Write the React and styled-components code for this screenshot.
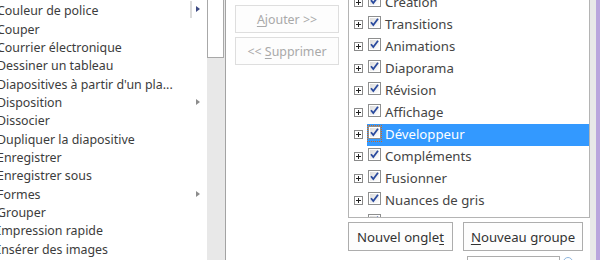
import React from 'react';
import styled, { createGlobalStyle } from 'styled-components';

const Global = createGlobalStyle`
  html, body { margin: 0; padding: 0; background: #fff; overflow: hidden; }
  body { font-family: "Noto Sans", "Open Sans", sans-serif; }
`;

const Page = styled.div`
  display: flex;
  width: 600px;
  height: 260px;
  overflow: hidden;
  background: #fff;
`;

/* ---------- left list ---------- */
const LeftPanel = styled.div`
  display: flex;
  flex: none;
  width: 225px;
  height: 100%;
  border-right: 1px solid #a3a3a3;
`;

const ItemList = styled.ul`
  list-style: none;
  margin: 0;
  padding: 1.5px 0 0;
  flex: 1;
  min-width: 0;
  overflow: hidden;
`;

const Item = styled.li`
  display: flex;
  align-items: center;
  height: 18.35px;
  font-size: 12.4px;
  color: #3c3c3c;
  white-space: nowrap;
`;

const ItemText = styled.span`
  flex: 1;
  margin-left: -3px;
`;

const Marker = styled.span`
  display: flex;
  align-items: center;
  flex: none;
  width: 17px;
  height: 100%;
  margin-top: ${p => (p.$split ? '-3px' : '0')};
`;

const SplitLine = styled.span`
  width: 2px;
  height: 17px;
  background: #dcdcdc;
  margin-right: 4px;
`;

const Arrow = styled.span`
  width: 0;
  height: 0;
  margin-left: ${p => (p.$split ? '0' : '6px')};
  border-top: 3.5px solid transparent;
  border-bottom: 3.5px solid transparent;
  border-left: 4px solid ${p => p.$color};
`;

const ScrollTrack = styled.div`
  flex: none;
  width: 18px;
  background: #e8e8e8;
`;

const Thumb = styled.div`
  width: 15px;
  height: 57px;
  background: #fff;
  border: 1px solid #a8a8a8;
  border-top: none;
`;

/* ---------- middle buttons ---------- */
const Middle = styled.div`
  flex: none;
  width: 113px;
  display: flex;
  flex-direction: column;
  gap: 4px;
  padding: 5px 0 0 9px;
`;

const DisabledButton = styled.div`
  width: 102px;
  height: ${p => p.$h}px;
  border: 1px solid #dedede;
  background: #fdfdfd;
  color: #a9a9a9;
  font-size: 12.4px;
  display: flex;
  align-items: center;
  justify-content: center;
  box-sizing: border-box;
  width: 104px;
`;

const U = styled.span`
  text-decoration: underline;
  text-underline-offset: 2px;
`;

/* ---------- right list ---------- */
const RightColumn = styled.div`
  flex: none;
  width: 242px;
  display: flex;
  flex-direction: column;
`;

const TabList = styled.div`
  height: 217px;
  flex: none;
  border: 1px solid #b4b4b4;
  border-top: none;
  overflow: hidden;
`;

const TabRows = styled.div`
  margin-top: -8px;
`;

const TabRow = styled.div`
  display: flex;
  align-items: stretch;
  height: 22px;
`;

const ExpandCell = styled.div`
  flex: none;
  width: 18px;
  display: flex;
  justify-content: center;
  padding-left: 1px;
  padding-top: 6px;
  box-sizing: border-box;
`;

const Expander = styled.svg`
  display: block;
`;

const TabLabel = styled.div`
  flex: 1;
  display: flex;
  align-items: flex-start;
  padding-top: 3px;
  box-sizing: border-box;
  background: ${p => (p.$selected ? '#3399ff' : 'transparent')};
  color: ${p => (p.$selected ? '#fff' : '#444')};
  font-size: 13.2px;
  white-space: nowrap;
`;

const CheckWrap = styled.span`
  flex: none;
  display: flex;
  width: 15px;
  height: 17px;
  margin-top: -2px;
  padding-top: 1px;
  padding-left: 1px;
  box-sizing: border-box;
  outline: ${p => (p.$focus ? '1px dotted #cc6a20' : 'none')};
  outline-offset: -1px;
`;

const TabText = styled.span`
  margin-left: 3px;
  line-height: 14px;
`;

const ButtonRow = styled.div`
  display: flex;
  gap: 10px;
  margin-top: 4px;
`;

const Button = styled.div`
  width: ${p => p.$w}px;
  height: 29px;
  border: 1px solid #adadad;
  background: #fdfdfd;
  color: #333;
  font-size: 13.2px;
  display: flex;
  align-items: center;
  justify-content: center;
  box-sizing: border-box;
`;

const BottomRow = styled.div`
  display: flex;
  align-items: flex-start;
  gap: 3px;
  margin-top: 5px;
  padding-left: 119px;
`;

const RenameBox = styled.div`
  width: 93px;
  height: 24px;
  border: 1px solid #adadad;
  box-sizing: border-box;
`;

const InfoDot = styled.div`
  width: 10px;
  height: 10px;
  margin-top: 1px;
  border-radius: 50%;
  border: 1px solid #8fb6de;
  box-sizing: border-box;
`;

const EdgeStrip = styled.div`
  flex: none;
  width: 10px;
  background: linear-gradient(to right, #e8e8e8 0 6px, #b9a5dd 6px 10px);
`;

const leftItems = [
  { t: 'Couleur de police', m: 'split' },
  { t: 'Couper' },
  { t: 'Courrier électronique' },
  { t: 'Dessiner un tableau' },
  { t: "Diapositives à partir d'un pla..." },
  { t: 'Disposition', m: 'menu' },
  { t: 'Dissocier' },
  { t: 'Dupliquer la diapositive' },
  { t: 'Enregistrer' },
  { t: 'Enregistrer sous' },
  { t: 'Formes', m: 'menu' },
  { t: 'Grouper' },
  { t: 'Impression rapide' },
  { t: 'Insérer des images' },
];

const tabs = [
  'Création',
  'Transitions',
  'Animations',
  'Diaporama',
  'Révision',
  'Affichage',
  'Développeur',
  'Compléments',
  'Fusionner',
  'Nuances de gris',
  'Noir et blanc',
];

function Check() {
  return (
    <svg width="13" height="13" viewBox="0 0 13 13">
      <defs>
        <linearGradient id="cbg" x1="0" y1="0" x2="1" y2="1">
          <stop offset="0" stopColor="#dcdcdc" />
          <stop offset="1" stopColor="#ffffff" />
        </linearGradient>
      </defs>
      <rect x="0.5" y="0.5" width="12" height="12" fill="#fff" stroke="#8e8f8f" />
      <rect x="2" y="2" width="9" height="9" fill="url(#cbg)" />
      <path d="M3 6.2 L5.3 9 L10 2.8" fill="none" stroke="#2a4a9e" strokeWidth="1.8" />
    </svg>
  );
}

function PlusBox() {
  return (
    <Expander width="9" height="9" viewBox="0 0 9 9">
      <rect x="0.5" y="0.5" width="8" height="8" fill="#fff" stroke="#8a8a8a" />
      <path d="M2 4.5 H7 M4.5 2 V7" stroke="#222" strokeWidth="1" />
    </Expander>
  );
}

export default function App() {
  return (
    <>
      <Global />
      <Page>
        <LeftPanel>
          <ItemList>
            {leftItems.map(it => (
              <Item key={it.t}>
                <ItemText>{it.t}</ItemText>
                {it.m === 'split' && (
                  <Marker $split>
                    <SplitLine />
                    <Arrow $split $color="#3d4a82" />
                  </Marker>
                )}
                {it.m === 'menu' && (
                  <Marker>
                    <Arrow $color="#8c8c8c" />
                  </Marker>
                )}
                {!it.m && <Marker />}
              </Item>
            ))}
          </ItemList>
          <ScrollTrack>
            <Thumb />
          </ScrollTrack>
        </LeftPanel>

        <Middle>
          <DisabledButton $h={28}>
            <span><U>A</U>jouter &gt;&gt;</span>
          </DisabledButton>
          <DisabledButton $h={28}>
            <span>&lt;&lt; <U>S</U>upprimer</span>
          </DisabledButton>
        </Middle>

        <RightColumn>
          <TabList>
            <TabRows>
              {tabs.map(t => {
                const sel = t === 'Développeur';
                return (
                  <TabRow key={t}>
                    <ExpandCell>
                      <PlusBox />
                    </ExpandCell>
                    <TabLabel $selected={sel}>
                      <CheckWrap $focus={sel}>
                        <Check />
                      </CheckWrap>
                      <TabText>{t}</TabText>
                    </TabLabel>
                  </TabRow>
                );
              })}
            </TabRows>
          </TabList>
          <ButtonRow>
            <Button $w={105}>
              <span>Nouvel ongle<U>t</U></span>
            </Button>
            <Button $w={120}>
              <span><U>N</U>ouveau groupe</span>
            </Button>
          </ButtonRow>
          <BottomRow>
            <RenameBox />
            <InfoDot />
          </BottomRow>
        </RightColumn>

        <EdgeStrip />
      </Page>
    </>
  );
}
